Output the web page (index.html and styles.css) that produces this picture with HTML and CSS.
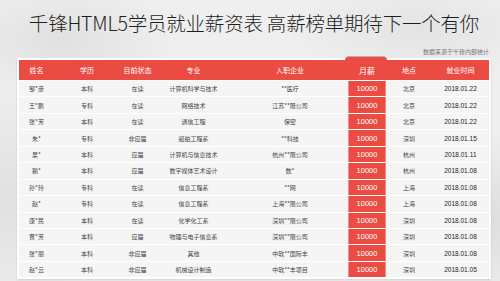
FILE: index.html
```html
<!DOCTYPE html>
<html lang="zh-CN">
<head>
<meta charset="utf-8">
<link rel="stylesheet" href="styles.css">
</head>
<body>
<div class="page">
  <h1 class="title">千锋HTML5学员就业薪资表 高薪榜单期待下一个有你</h1>
  <div class="source">数据来源于千锋内部统计</div>
  <div class="panel">
    <div class="row head">
      <div>姓名</div><div>学历</div><div>目前状态</div><div>专业</div><div>入职企业</div><div class="sal-head"><span>月薪</span></div><div>地点</div><div>就业时间</div>
    </div>
    <div class="row"><div>邹*彦</div><div>本科</div><div>在读</div><div>计算机科学与技术</div><div>**医疗</div><div class="sal">10000</div><div>北京</div><div class="date">2018.01.22</div></div>
    <div class="row"><div>王*鹏</div><div>专科</div><div>在读</div><div>网络技术</div><div>江苏**限公司</div><div class="sal">10000</div><div>北京</div><div class="date">2018.01.22</div></div>
    <div class="row"><div>张*芳</div><div>本科</div><div>在读</div><div>通信工程</div><div>保密</div><div class="sal">10000</div><div>北京</div><div class="date">2018.01.22</div></div>
    <div class="row"><div>朱*</div><div>专科</div><div>非应届</div><div>船舶工程系</div><div>**科技</div><div class="sal">10000</div><div>深圳</div><div class="date">2018.01.15</div></div>
    <div class="row"><div>吴*</div><div>本科</div><div>应届</div><div>计算机与信息技术</div><div>杭州**限公司</div><div class="sal">10000</div><div>杭州</div><div class="date">2018.01.11</div></div>
    <div class="row"><div>赖*</div><div>本科</div><div>应届</div><div>数字媒体艺术设计</div><div>数*</div><div class="sal">10000</div><div>杭州</div><div class="date">2018.01.08</div></div>
    <div class="row"><div>孙*玲</div><div>专科</div><div>在读</div><div>信息工程系</div><div>**网</div><div class="sal">10000</div><div>上海</div><div class="date">2018.01.08</div></div>
    <div class="row"><div>赵*</div><div>专科</div><div>在读</div><div>信息工程系</div><div>上海**限公司</div><div class="sal">10000</div><div>上海</div><div class="date">2018.01.08</div></div>
    <div class="row"><div>康*民</div><div>本科</div><div>在读</div><div>化学化工系</div><div>深圳**限公司</div><div class="sal">10000</div><div>深圳</div><div class="date">2018.01.08</div></div>
    <div class="row"><div>曹*芳</div><div>本科</div><div>应届</div><div>物理与电子信息系</div><div>深圳**限公司</div><div class="sal">10000</div><div>深圳</div><div class="date">2018.01.08</div></div>
    <div class="row"><div>张*丽</div><div>本科</div><div>非应届</div><div>其他</div><div>中软**国际丰</div><div class="sal">10000</div><div>深圳</div><div class="date">2018.01.08</div></div>
    <div class="row"><div>赵*云</div><div>本科</div><div>非应届</div><div>机械设计制造</div><div>中软**丰项目</div><div class="sal">10000</div><div>深圳</div><div class="date">2018.01.05</div></div>
  </div>
</div>
</body>
</html>
```
FILE: styles.css
```css
* { box-sizing: border-box; margin: 0; padding: 0; }
html, body { width: 500px; height: 281px; overflow: hidden; }
body {
  font-family: "Noto Sans CJK SC", "Noto Sans", sans-serif;
  background:
    radial-gradient(ellipse 120px 60px at 60px 40px, rgba(215,215,215,0.6), transparent),
    radial-gradient(ellipse 140px 50px at 420px 30px, rgba(220,220,220,0.6), transparent),
    radial-gradient(ellipse 160px 90px at 490px 220px, rgba(210,210,210,0.6), transparent),
    radial-gradient(ellipse 80px 120px at 5px 200px, rgba(215,215,215,0.6), transparent),
    #efefef;
}
.page { display: flex; flex-direction: column; }
.title {
  margin-top: 10px;
  height: 25px;
  font-size: 19.5px;
  line-height: 25px;
  font-weight: 300;
  color: #1e1e1e;
  text-align: center;
  letter-spacing: -0.2px;
  padding-left: 8px;
}
.source {
  margin-top: 12px;
  height: 9px;
  font-size: 6px;
  line-height: 9px;
  color: #777;
  text-align: right;
  padding-right: 11px;
}
.panel {
  margin: 2px 9px 0 17px;
  background: #fff;
  padding: 2px;
  box-shadow: 0 1px 2px rgba(0,0,0,0.12);
}
.row {
  display: grid;
  grid-template-columns: 35px 66px 35px 77px 116px 38px 46px 57px;
  height: 16.45px;
  background: #f5f5f5;
  border-top: 1px solid #fff;
  font-size: 6px;
  color: #444;
}
.row > div {
  display: flex;
  align-items: center;
  justify-content: center;
  white-space: nowrap;
}
.row.head {
  height: 20px;
  border-top: 0;
  background: #ea4c43;
  color: #fff;
  font-size: 7px;
}
.sal-head {
  position: relative;
  font-size: 8px;
}
.sal-head::before {
  content: "";
  position: absolute;
  left: -3px;
  right: -1px;
  top: -3px;
  bottom: 0;
  background: #ea4c43;
  border-radius: 4px 4px 0 0;
  box-shadow: 0 -1px 0 rgba(150,40,35,0.35);
}
.sal-head > span { position: relative; }
.sal {
  background: #ea4c43;
  color: #fff;
  font-size: 7.5px;
  font-family: "Liberation Sans", "Noto Sans", sans-serif;
  box-shadow: inset 1px 0 0 #f28a84, inset -1px 0 0 #f28a84;
}
.date {
  font-family: "Liberation Sans", "Noto Sans", sans-serif;
  font-size: 6.5px;
  color: #222;
}
```
